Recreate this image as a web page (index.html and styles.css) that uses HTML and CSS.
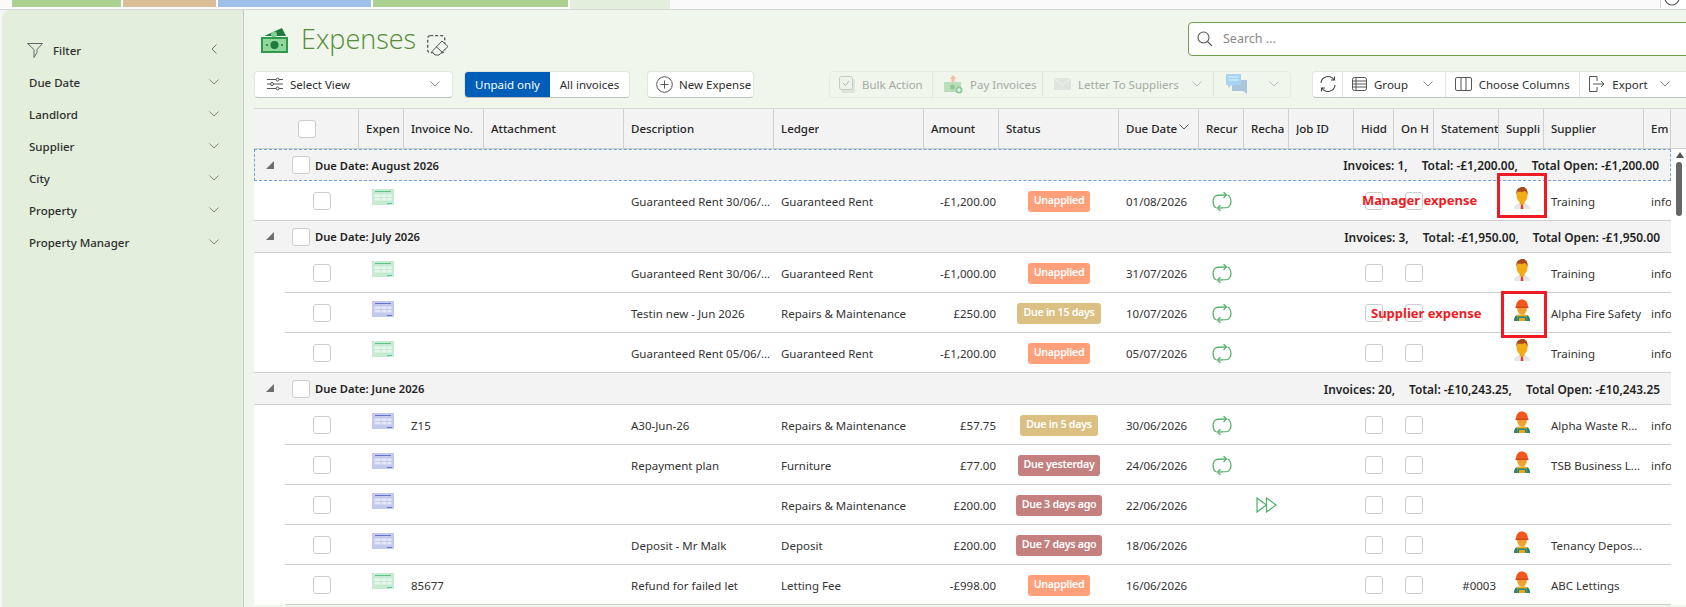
FILE: index.html
```html
<!DOCTYPE html>
<html lang="en">
<head>
<meta charset="utf-8">
<title>Expenses</title>
<link rel="stylesheet" href="styles.css">
</head>
<body>
<svg class="defs" width="0" height="0" aria-hidden="true">
  <symbol id="chev" viewBox="0 0 10 6"><path d="M.5.5 5 5 9.5.5" fill="none" stroke="currentColor" stroke-width=".9"/></symbol>
  <symbol id="sheet-g" viewBox="0 0 22 16"><rect width="22" height="16" fill="#c6ebd2"/><path d="M3 2.5h16" stroke="#5cc48a"/><path d="M2.500 5.500h17v6h-17z" fill="#e6f6ec"/><path d="M2 8.500h18M9 5.500v6M15 5.500v6" stroke="#c6ebd2"/><path d="M15 14.500h5" stroke="#5cc48a"/></symbol>
  <symbol id="sheet-b" viewBox="0 0 22 16"><rect width="22" height="16" fill="#c3c9ea"/><path d="M3 2.500h16" stroke="#6672cc"/><path d="M2.500 5.500h17v6h-17z" fill="#e6e8f7"/><path d="M2 8.500h18M9 5.500v6M15 5.500v6" stroke="#c3c9ea"/><path d="M15 14.500h5" stroke="#6672cc"/></symbol>
  <symbol id="recur" viewBox="0 0 20 21"><g fill="none" stroke="#5bb273" stroke-width="1.300"><path d="M4.500 17C.4 15.500 0 7.500 3.500 5 5 4 8 4 14 4"/><path d="M11.500 1l3 3-3 3"/><path d="M15.500 4c4.100 1.500 4.500 9.500 1 12-1.500 1-4.500 1-10.500 1"/><path d="M8.500 14l-3 3 3 3"/></g></symbol>
  <symbol id="manager" viewBox="0 0 18 22"><path d="M1 22c0-4 3-5 5.500-5.500h5c2.500.5 5.500 1.500 5.500 5.500z" fill="#e6e6e6"/><path d="M8 16.500h2l.3 5.500H7.700z" fill="#e33b2e"/><path d="M6.500 14h5v3l-2.500 1-2.500-1z" fill="#f0a818"/><ellipse cx="9" cy="8.500" rx="5.500" ry="7" fill="#f2ab12"/><path d="M3.300 8C2.500 2.500 6 0 9.500 0c3.500 0 5.800 3 5 8-.6-2.500-1.500-3.500-2.500-4-2 1-6 1-7.300.5C4 5.500 3.600 6.500 3.300 8z" fill="#a8481c"/></symbol>
  <symbol id="worker" viewBox="0 0 18 22"><path d="M1 22c0-4.500 2.500-6 5-6.500h6c2.500.5 5 2 5 6.500z" fill="#f2a31c"/><path d="M1 22c0-3 1-5 3-5.800V22zM17 22c0-3-1-5-3-5.800V22z" fill="#14877e"/><path d="M4.500 17.500h9V22h-9z" fill="#14877e"/><path d="M6 19h6v3H6z" fill="#f2a31c"/><ellipse cx="9" cy="10" rx="4.800" ry="5.500" fill="#f0a030"/><path d="M3 8.500C3 3 5.500.5 9 .5s6 2.500 6 8z" fill="#f0561e"/><path d="M2.500 7.500h13v1.600h-13z" fill="#d8441a"/></symbol>
  <symbol id="tri" viewBox="0 0 8 8"><path d="M8 0v8H0z" fill="#6e6e6e"/></symbol>
  <symbol id="ff" viewBox="0 0 21 16"><g fill="none" stroke="#4fae6b" stroke-width="1.200"><path d="M1 1l9.500 7L1 15z"/><path d="M10.500 1l9.500 7-9.500 7z"/></g></symbol>
</svg>

<nav class="tabs">
  <span class="tab tab-green tab-a"></span>
  <span class="tab tab-tan"></span>
  <span class="tab tab-blue"></span>
  <span class="tab tab-green tab-d"></span>
  <span class="tab tab-active"></span>
  <span class="tab-end"><svg width="20" height="8" viewBox="0 0 20 8"><circle cx="11" cy="-2" r="7" fill="none" stroke="#555" stroke-width="1.200"/></svg></span>
</nav>

<div class="panel">
  <aside class="sidebar">
    <div class="filter-head">
      <svg class="filter-ico" width="16" height="15" viewBox="0 0 16 15"><path d="M.5.500h15L10 6.500v3l-3 5V6.500z" fill="none" stroke="#666"/></svg>
      <span class="filter-label">Filter</span>
      <svg class="filter-back" width="6" height="10" viewBox="0 0 6 10"><path d="M5.500.5 1 5l4.500 4.500" fill="none" stroke="#666" stroke-width=".9"/></svg>
    </div>
    <div class="facet"><span>Due Date</span><svg class="chev"><use href="#chev"/></svg></div>
    <div class="facet"><span>Landlord</span><svg class="chev"><use href="#chev"/></svg></div>
    <div class="facet"><span>Supplier</span><svg class="chev"><use href="#chev"/></svg></div>
    <div class="facet"><span>City</span><svg class="chev"><use href="#chev"/></svg></div>
    <div class="facet"><span>Property</span><svg class="chev"><use href="#chev"/></svg></div>
    <div class="facet"><span>Property Manager</span><svg class="chev"><use href="#chev"/></svg></div>
  </aside>

  <main class="main">
    <header class="title-row">
      <svg class="cash" width="27" height="25" viewBox="0 0 27 25">
        <path d="M1 9 21 0l4 8H3z" fill="#1f7a3d"/><circle cx="13" cy="6.500" r="3" fill="#7fcf8f"/>
        <rect y="9" width="27" height="16" fill="#2f9a4e"/><rect x="2" y="11" width="23" height="12" fill="#8fd79b"/><circle cx="13.500" cy="17" r="4" fill="#1f7a3d"/><circle cx="6" cy="17" r="1" fill="#1f7a3d"/><circle cx="21" cy="17" r="1" fill="#1f7a3d"/>
      </svg>
      <h1 class="title">Expenses</h1>
      <svg class="clear-ico" width="22" height="21" viewBox="0 0 22 21" fill="none" stroke="#555">
        <rect x=".7" y=".7" width="17" height="17" rx="2.500" stroke-dasharray="3 2" stroke-width="1.300"/>
        <path d="M15 6l6 5.500-9 8.500H8l-3-3.500z" fill="#f0f6ec"/><path d="M9 11.500l6 5.500"/>
      </svg>
      <label class="search">
        <svg width="16" height="16" viewBox="0 0 16 16" fill="none" stroke="#555" stroke-width="1.100"><circle cx="6.500" cy="6.500" r="5.500"/><path d="M10.500 10.500 15 15"/></svg>
        <span class="search-text">Search ...</span>
      </label>
    </header>

    <div class="toolbar">
      <button class="btn select-view">
        <svg width="16" height="14" viewBox="0 0 16 14" fill="none" stroke="#555"><path d="M0 2.500h16M0 7h16M0 11.500h16"/><circle cx="10.500" cy="2.500" r="1.500" fill="#fff"/><circle cx="5" cy="7" r="1.500" fill="#fff"/><circle cx="10.500" cy="11.500" r="1.500" fill="#fff"/></svg>
        <span>Select View</span><svg class="chev push"><use href="#chev"/></svg>
      </button>
      <div class="toggle"><button class="seg seg-on">Unpaid only</button><button class="seg">All invoices</button></div>
      <button class="btn new-exp">
        <svg width="17" height="17" viewBox="0 0 17 17" fill="none" stroke="#555"><circle cx="8.500" cy="8.500" r="7.800"/><path d="M8.500 4.500v8M4.500 8.500h8"/></svg>
        <span>New Expense</span>
      </button>
      <div class="group group-off">
        <button class="gbtn w-bulk"><svg width="16" height="17" viewBox="0 0 16 17"><rect x="2" y="3" width="14" height="14" rx="2" fill="#dfe4dc"/><rect x=".5" y=".5" width="13" height="13" rx="2" fill="#eef2ea" stroke="#c4cac0"/><path d="M4 7l2.500 2.500L10 5" fill="none" stroke="#b5bbb0"/></svg><span>Bulk Action</span></button>
        <button class="gbtn w-pay"><svg width="19" height="19" viewBox="0 0 19 19"><path d="M9 0l3.500 4H10.500v4h-3V4H5.500z" fill="#f4c0a8"/><rect y="7" width="17" height="10" fill="#b9dfb9"/><circle cx="8.500" cy="12" r="2.500" fill="#8fc99a"/><circle cx="15" cy="15" r="3.500" fill="#8fc99a"/><path d="M15 13v4M13 15h4" stroke="#fff"/></svg><span>Pay Invoices</span></button>
        <button class="gbtn w-letter"><svg width="17" height="12" viewBox="0 0 17 12"><rect width="17" height="12" fill="#dfe4de"/><path d="M0 0l8.500 7L17 0" fill="none" stroke="#f2f5ef"/></svg><span>Letter To Suppliers</span><svg class="chev push"><use href="#chev"/></svg></button>
        <button class="gbtn w-chat"><svg width="21" height="20" viewBox="0 0 21 20"><path d="M6 6h15v10v4l-4-3H6z" fill="#a9c6de"/><path d="M0 0h15v11H6l-4 3v-3H0z" fill="#a6d4f2"/><path d="M2.500 3h10M2.500 6h10" stroke="#e8f4fc"/></svg><svg class="chev push"><use href="#chev"/></svg></button>
      </div>
      <div class="group group-right">
        <button class="gbtn w-refresh"><svg width="18" height="18" viewBox="0 0 18 18" fill="none" stroke="#444" stroke-width="1.100"><path d="M2 8a7 7 0 0 1 13-3"/><path d="M16 10a7 7 0 0 1-13 3"/><path d="M15.500 1.500V5H12M2.500 16.500V13H6"/></svg></button>
        <button class="gbtn w-group"><svg width="15" height="14" viewBox="0 0 15 14" fill="none" stroke="#555"><rect x=".5" y=".5" width="14" height="13" rx="2"/><path d="M.5 4h14M.5 7h14M.5 10h14M4 .5v13"/></svg><span>Group</span><svg class="chev push"><use href="#chev"/></svg></button>
        <button class="gbtn w-cols"><svg width="17" height="14" viewBox="0 0 17 14" fill="none" stroke="#555"><rect x=".5" y=".5" width="16" height="13" rx="1.500"/><path d="M6 .5v13M11 .5v13"/></svg><span>Choose Columns</span></button>
        <button class="gbtn w-export"><svg width="16" height="16" viewBox="0 0 16 16" fill="none" stroke="#555"><path d="M8 5V.5H.5v15H8V11"/><path d="M4 8h11M12 5l3 3-3 3"/></svg><span>Export</span><svg class="chev push"><use href="#chev"/></svg></button>
      </div>
    </div>

    <section class="grid">
      <div class="head">
        <div class="th th-select"><span class="cb"></span></div>
        <div class="th"><span class="clip">Expen</span></div>
        <div class="th"><span class="clip">Invoice No.</span></div>
        <div class="th"><span class="clip">Attachment</span></div>
        <div class="th"><span class="clip">Description</span></div>
        <div class="th"><span class="clip">Ledger</span></div>
        <div class="th"><span class="clip">Amount</span></div>
        <div class="th"><span class="clip">Status</span></div>
        <div class="th"><span class="clip">Due Date</span><svg class="chev sort"><use href="#chev"/></svg></div>
        <div class="th"><span class="clip">Recur</span></div>
        <div class="th"><span class="clip">Recha</span></div>
        <div class="th"><span class="clip">Job ID</span></div>
        <div class="th"><span class="clip">Hidd</span></div>
        <div class="th"><span class="clip">On H</span></div>
        <div class="th"><span class="clip">Statement</span></div>
        <div class="th"><span class="clip">Suppli</span></div>
        <div class="th"><span class="clip">Supplier</span></div>
        <div class="th th-email"><span class="clip">Em</span></div>
        <div class="th th-end"></div>
      </div>

      <div class="body">
        <div class="rows">
          <div class="grp grp-focus"><svg class="tri"><use href="#tri"/></svg><span class="cb"></span><b class="grp-name">Due Date: August 2026</b><span class="sum"><b>Invoices: 1,</b><b>Total: -£1,200.00,</b><b>Total Open: -£1,200.00</b></span></div>
          <div class="row last">
            <div class="c-sel"><span class="cb"></span></div><div class="c-ico"><svg class="sheet"><use href="#sheet-g"/></svg></div><div></div><div></div>
            <div class="c">Guaranteed Rent 30/06/...</div><div class="c">Guaranteed Rent</div><div class="c r">-£1,200.00</div>
            <div class="c-mid"><span class="pill unapplied">Unapplied</span></div><div class="c">01/08/2026</div>
            <div class="c-mid"><svg class="recur"><use href="#recur"/></svg></div><div></div><div></div>
            <div class="c-mid"><span class="cb"></span></div><div class="c-mid"><span class="cb"></span></div><div></div>
            <div class="c-person"><svg class="person"><use href="#manager"/></svg></div><div class="c">Training</div><div class="c">info</div>
          </div>

          <div class="grp"><svg class="tri"><use href="#tri"/></svg><span class="cb"></span><b class="grp-name">Due Date: July 2026</b><span class="sum"><b>Invoices: 3,</b><b>Total: -£1,950.00,</b><b>Total Open: -£1,950.00</b></span></div>
          <div class="row">
            <div class="c-sel"><span class="cb"></span></div><div class="c-ico"><svg class="sheet"><use href="#sheet-g"/></svg></div><div></div><div></div>
            <div class="c">Guaranteed Rent 30/06/...</div><div class="c">Guaranteed Rent</div><div class="c r">-£1,000.00</div>
            <div class="c-mid"><span class="pill unapplied">Unapplied</span></div><div class="c">31/07/2026</div>
            <div class="c-mid"><svg class="recur"><use href="#recur"/></svg></div><div></div><div></div>
            <div class="c-mid"><span class="cb"></span></div><div class="c-mid"><span class="cb"></span></div><div></div>
            <div class="c-person"><svg class="person"><use href="#manager"/></svg></div><div class="c">Training</div><div class="c">info</div>
          </div>
          <div class="row">
            <div class="c-sel"><span class="cb"></span></div><div class="c-ico"><svg class="sheet"><use href="#sheet-b"/></svg></div><div></div><div></div>
            <div class="c">Testin new - Jun 2026</div><div class="c">Repairs &amp; Maintenance</div><div class="c r">£250.00</div>
            <div class="c-mid"><span class="pill soon">Due in 15 days</span></div><div class="c">10/07/2026</div>
            <div class="c-mid"><svg class="recur"><use href="#recur"/></svg></div><div></div><div></div>
            <div class="c-mid"><span class="cb"></span></div><div class="c-mid"><span class="cb"></span></div><div></div>
            <div class="c-person"><svg class="person"><use href="#worker"/></svg></div><div class="c">Alpha Fire Safety</div><div class="c">info</div>
          </div>
          <div class="row last">
            <div class="c-sel"><span class="cb"></span></div><div class="c-ico"><svg class="sheet"><use href="#sheet-g"/></svg></div><div></div><div></div>
            <div class="c">Guaranteed Rent 05/06/...</div><div class="c">Guaranteed Rent</div><div class="c r">-£1,200.00</div>
            <div class="c-mid"><span class="pill unapplied">Unapplied</span></div><div class="c">05/07/2026</div>
            <div class="c-mid"><svg class="recur"><use href="#recur"/></svg></div><div></div><div></div>
            <div class="c-mid"><span class="cb"></span></div><div class="c-mid"><span class="cb"></span></div><div></div>
            <div class="c-person"><svg class="person"><use href="#manager"/></svg></div><div class="c">Training</div><div class="c">info</div>
          </div>

          <div class="grp"><svg class="tri"><use href="#tri"/></svg><span class="cb"></span><b class="grp-name">Due Date: June 2026</b><span class="sum"><b>Invoices: 20,</b><b>Total: -£10,243.25,</b><b>Total Open: -£10,243.25</b></span></div>
          <div class="row">
            <div class="c-sel"><span class="cb"></span></div><div class="c-ico"><svg class="sheet"><use href="#sheet-b"/></svg></div><div class="c">Z15</div><div></div>
            <div class="c">A30-Jun-26</div><div class="c">Repairs &amp; Maintenance</div><div class="c r">£57.75</div>
            <div class="c-mid"><span class="pill soon">Due in 5 days</span></div><div class="c">30/06/2026</div>
            <div class="c-mid"><svg class="recur"><use href="#recur"/></svg></div><div></div><div></div>
            <div class="c-mid"><span class="cb"></span></div><div class="c-mid"><span class="cb"></span></div><div></div>
            <div class="c-person"><svg class="person"><use href="#worker"/></svg></div><div class="c">Alpha Waste R...</div><div class="c">info</div>
          </div>
          <div class="row">
            <div class="c-sel"><span class="cb"></span></div><div class="c-ico"><svg class="sheet"><use href="#sheet-b"/></svg></div><div></div><div></div>
            <div class="c">Repayment plan</div><div class="c">Furniture</div><div class="c r">£77.00</div>
            <div class="c-mid"><span class="pill late">Due yesterday</span></div><div class="c">24/06/2026</div>
            <div class="c-mid"><svg class="recur"><use href="#recur"/></svg></div><div></div><div></div>
            <div class="c-mid"><span class="cb"></span></div><div class="c-mid"><span class="cb"></span></div><div></div>
            <div class="c-person"><svg class="person"><use href="#worker"/></svg></div><div class="c">TSB Business L...</div><div class="c">info</div>
          </div>
          <div class="row">
            <div class="c-sel"><span class="cb"></span></div><div class="c-ico"><svg class="sheet"><use href="#sheet-b"/></svg></div><div></div><div></div>
            <div class="c"></div><div class="c">Repairs &amp; Maintenance</div><div class="c r">£200.00</div>
            <div class="c-mid"><span class="pill late">Due 3 days ago</span></div><div class="c">22/06/2026</div>
            <div></div><div class="c-mid"><svg class="ff"><use href="#ff"/></svg></div><div></div>
            <div class="c-mid"><span class="cb"></span></div><div class="c-mid"><span class="cb"></span></div><div></div>
            <div></div><div></div><div></div>
          </div>
          <div class="row">
            <div class="c-sel"><span class="cb"></span></div><div class="c-ico"><svg class="sheet"><use href="#sheet-b"/></svg></div><div></div><div></div>
            <div class="c">Deposit - Mr Malk</div><div class="c">Deposit</div><div class="c r">£200.00</div>
            <div class="c-mid"><span class="pill late">Due 7 days ago</span></div><div class="c">18/06/2026</div>
            <div></div><div></div><div></div>
            <div class="c-mid"><span class="cb"></span></div><div class="c-mid"><span class="cb"></span></div><div></div>
            <div class="c-person"><svg class="person"><use href="#worker"/></svg></div><div class="c">Tenancy Depos...</div><div></div>
          </div>
          <div class="row">
            <div class="c-sel"><span class="cb"></span></div><div class="c-ico"><svg class="sheet"><use href="#sheet-g"/></svg></div><div class="c">85677</div><div></div>
            <div class="c">Refund for failed let</div><div class="c">Letting Fee</div><div class="c r">-£998.00</div>
            <div class="c-mid"><span class="pill unapplied">Unapplied</span></div><div class="c">16/06/2026</div>
            <div></div><div></div><div></div>
            <div class="c-mid"><span class="cb"></span></div><div class="c-mid"><span class="cb"></span></div><div class="c r">#0003</div>
            <div class="c-person"><svg class="person"><use href="#worker"/></svg></div><div class="c">ABC Lettings</div><div></div>
          </div>

          <span class="note note-mgr">Manager expense</span>
          <span class="mark mark-mgr"></span>
          <span class="note note-sup">Supplier expense</span>
          <span class="mark mark-sup"></span>
        </div>
        <div class="rail">
          <svg class="rail-up" width="8" height="6" viewBox="0 0 8 6"><path d="M4 0l4 6H0z" fill="#555"/></svg>
          <div class="rail-thumb"></div>
        </div>
      </div>
    </section>
  </main>
</div>
</body>
</html>
```

FILE: styles.css
```css
* { box-sizing: border-box; }
html, body { margin: 0; height: 607px; overflow: hidden; }
body {
  display: flex;
  flex-direction: column;
  background: #f6f6f6;
  font-family: "Noto Sans", "Open Sans", sans-serif;
  font-size: 11.5px;
  color: #2e2e2e;
}
svg { flex: none; }
.defs { position: absolute; }
button { font: inherit; color: inherit; margin: 0; border: 0; background: none; padding: 0; }

/* tab strip */
.tabs { display: flex; gap: 2px; flex: 0 0 9px; padding-left: 12px; background: #fafafa; border-bottom: 1px solid #d6d6d6; }
.tab { height: 7px; }
.tab-a { width: 109px; }
.tab-d { width: 195px; }
.tab-green { background: #acd08f; }
.tab-tan { width: 93px; background: #d9be98; }
.tab-blue { width: 153px; background: #9cc0e6; }
.tab-active { width: 100px; height: 9px; background: #e3efdc; }
.tab-end { margin-left: auto; width: 26px; height: 8px; background: #fff; border-left: 1px solid #d6d6d6; }
.tab-end svg { display: block; }

/* layout */
.panel { flex: 1; display: flex; min-height: 0; padding-left: 2px; }
.sidebar { flex: 0 0 242px; background: #e3efdc; border-right: 1px solid #c4c8c2; border-top-left-radius: 8px; padding: 30px 0 0 25px; }
.main { flex: 1; min-width: 0; background: #f0f6ec; padding: 12px 0 0 10px; overflow: hidden; }

/* sidebar */
.filter-head { display: flex; align-items: center; height: 20px; padding-right: 26px; }
.filter-label { margin-left: 10px; font-weight: 500; }
.filter-back { margin-left: auto; margin-top: -3px; }
.facet { display: flex; align-items: center; justify-content: space-between; height: 32px; padding: 0 24px 0 2px; font-weight: 500; }
.filter-head + .facet { margin-top: 6px; }
.chev { width: 10px; height: 6px; color: #777; }
.push { margin-left: auto; }

/* title */
.title-row { display: flex; align-items: flex-start; height: 34px; }
.cash { margin: 6px 0 0 7px; }
.title { margin: -5px 0 0 13px; font-family: "Open Sans", "Noto Sans", sans-serif; font-size: 27px; font-weight: 300; line-height: 44px; color: #558b3a; }
.clear-ico { margin: 13px 0 0 11px; }
.search { display: flex; align-items: center; gap: 10px; width: 520px; height: 34px; margin-left: auto; margin-right: -22px; padding: 0 0 1px 8px; background: #fff; border: 1px solid #6fa050; border-radius: 4px; }
.search-text { font-size: 12.5px; color: #888; }

/* toolbar */
.toolbar { display: flex; align-items: stretch; height: 27px; margin-top: 15px; }
.toolbar > * { flex: none; }
.btn, .group-right, .toggle { background: #fff; border: 1px solid #e4e6e2; border-bottom-color: #bfc2bc; border-radius: 4px; }
.btn { display: flex; align-items: center; padding-bottom: 1px; }
.select-view { width: 199px; gap: 7px; padding: 0 12px 1px; }
.toggle { display: flex; margin-left: 11px; overflow: hidden; }
.seg { width: 79px; padding-bottom: 1px; }
.seg-on { width: 85px; background: #005eb8; color: #fff; }
.new-exp { margin-left: 17px; gap: 6px; padding: 0 8px 1px; width: 107px; white-space: nowrap; }
.group { display: flex; border-radius: 4px; }
.group-off { margin-left: 75px; border: 1px solid #e6ece2; color: #a6aaa3; }
.group-right { margin-left: 21px; width: 380px; }
.gbtn { display: flex; align-items: center; gap: 7px; padding: 0 9px 1px; border-right: 1px solid #e2e5df; white-space: nowrap; }
.w-bulk { width: 103px; }
.w-pay { width: 110px; padding: 0 6px 1px 11px; }
.w-letter { width: 171px; padding: 0 11px 1px; }
.w-chat { width: 76px; padding: 0 11px 1px 12px; border-right: 0; }
.w-refresh { width: 30px; padding: 0 6px 1px; }
.w-group { width: 103px; padding-right: 12px; }
.w-cols { width: 135px; }
.w-export { width: 111px; border-right: 0; padding-right: 21px; }
.group-off .chev { color: #b5b9b2; }

/* grid */
.grid { --cols: 105px 45px 80px 140px 150px 150px 75px 120px 80px 45px 45px 65px 40px 40px 65px 45px 100px 27px; margin-top: 10px; background: #fff; }
.head { display: grid; grid-template-columns: var(--cols) 15px; height: 41px; background: #f3f3f3; border-top: 1px solid #d8d8d8; border-bottom: 1px solid #cfcfcf; }
.th { display: flex; align-items: center; min-width: 0; padding: 0 0 0 7px; border-right: 1px solid #cfcfcf; font-weight: 500; color: #262626; }
.th:first-child { padding-left: 44px; }
.th-end { border-right: 0; }
.clip { display: block; overflow: hidden; white-space: nowrap; }
.sort { flex: none; margin-left: 2px; margin-top: -3px; color: #444; }
.cb { display: block; width: 18px; height: 18px; flex: none; background: #fff; border: 1px solid #cdcdcd; border-radius: 3px; }

.body { display: flex; }
.rows { position: relative; flex: 0 0 1417px; overflow: hidden; }
.grp { display: flex; align-items: center; height: 32px; background: #f3f3f3; border-bottom: 1px solid #cfcfcf; padding-left: 12px; }
.grp-focus { border: 1px dashed #6fa3d8; padding-left: 11px; }
.tri { width: 8px; height: 8px; margin: -1px 0 0; }
.grp .cb { margin-left: 18px; }
.grp-name { margin-left: 5px; font-size: 11.2px; font-weight: 600; color: #1f1f1f; }
.sum { display: flex; gap: 14px; margin-left: auto; padding-right: 11px; font-size: 11.9px; }
.sum b { font-weight: 600; color: #1f1f1f; }

.row { display: grid; grid-template-columns: var(--cols); height: 40px; background: linear-gradient(#cfcfcf, #cfcfcf) 31px 100% / calc(100% - 31px) 1px no-repeat; }
.row.last { background: linear-gradient(#cfcfcf, #cfcfcf) 0 100% / 100% 1px no-repeat; }
.c { display: flex; align-items: center; min-width: 0; padding: 0 0 0 7px; white-space: nowrap; overflow: hidden; color: #333; }
.r { justify-content: flex-end; padding-left: 0; padding-right: 3px; }
.c-sel { display: flex; align-items: center; padding-left: 59px; }
.c-ico { padding: 8px 0 0 13px; }
.sheet { display: block; width: 22px; height: 16px; }
.c-mid { display: flex; align-items: center; justify-content: center; }
.c-person { display: flex; justify-content: center; padding-top: 6px; }
.person { width: 18px; height: 22px; }
.recur { width: 20px; height: 21px; }
.ff { width: 21px; height: 16px; margin-top: -1px; }
.pill { display: block; height: 21px; padding: 0 6px; border-radius: 3px; color: #fff; font-size: 10.7px; font-weight: 600; letter-spacing: -.3px; line-height: 19px; white-space: nowrap; }
.unapplied { background: #ffa07a; }
.soon { background: #dcc083; }
.late { background: #c47f7f; }

/* annotations over the grid */
.note { position: absolute; font-size: 13px; font-weight: 700; color: #ed1c24; white-space: nowrap; line-height: 18px; }
.note-mgr { left: 1108px; top: 42px; }
.note-sup { left: 1117px; top: 155px; }
.mark { position: absolute; border: 3px solid #ed1c24; }
.mark-mgr { left: 1243px; top: 24px; width: 50px; height: 45px; }
.mark-sup { left: 1247px; top: 142px; width: 46px; height: 47px; }

.rail { flex: 0 0 15px; padding: 3px 0 0 5px; background: #fff; }
.rail-up { display: block; }
.rail-thumb { width: 6px; height: 54px; margin-top: 4px; border-radius: 3px; background: #666; }
```
